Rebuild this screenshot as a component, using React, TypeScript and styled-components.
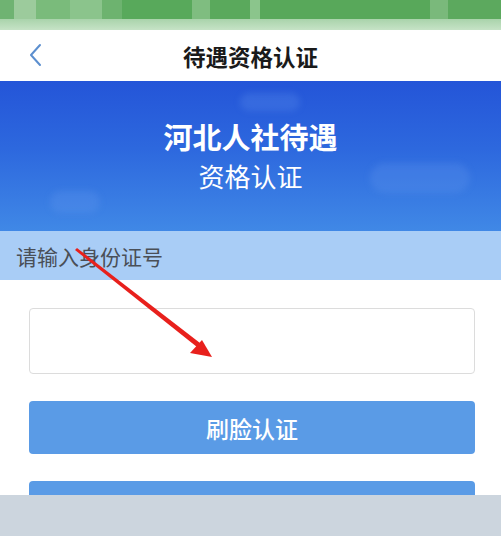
import React from "react";
import styled, { createGlobalStyle } from "styled-components";

const GlobalStyle = createGlobalStyle`
  html, body {
    margin: 0;
    padding: 0;
    background: #fff;
  }
  body {
    font-family: "Noto Sans CJK SC", "Noto Sans", sans-serif;
  }
`;

const Screen = styled.div`
  position: relative;
  width: 501px;
  height: 536px;
  overflow: hidden;
  background: #fff;
  display: flex;
  flex-direction: column;
`;

const StatusBar = styled.div`
  height: 30px;
  display: flex;
  flex-direction: column;
`;

const GreenBlur = styled.div`
  height: 19px;
  display: flex;
  background: #5aa95c;
`;

const Pixel = styled.div<{ tone: string; w: number }>`
  width: ${(p) => p.w}px;
  background: ${(p) => p.tone};
`;

const PaleGreen = styled.div`
  flex: 1;
  background: linear-gradient(180deg, #a9d3ab 0%, #c6e3c6 100%);
`;

const NavBar = styled.div`
  height: 51px;
  display: flex;
  align-items: center;
  justify-content: center;
  position: relative;
  background: #fff;
`;

const BackButton = styled.div`
  position: absolute;
  left: 28px;
  top: 12px;
  width: 16px;
  height: 26px;
`;

const NavTitle = styled.h1`
  margin: 0;
  font-size: 22.5px;
  font-weight: 700;
  color: #1a1a1a;
`;

const Banner = styled.div`
  position: relative;
  height: 150px;
  background: linear-gradient(180deg, #2455d8 0%, #2d68de 45%, #4088e6 100%);
  display: flex;
  flex-direction: column;
  align-items: center;
  padding-top: 35px;
  box-sizing: border-box;
  overflow: hidden;
`;

const Cloud = styled.div<{ w: number; h: number }>`
  position: absolute;
  width: ${(p) => p.w}px;
  height: ${(p) => p.h}px;
  border-radius: ${(p) => p.h}px;
  background: rgba(110, 160, 240, 0.22);
  filter: blur(3px);
`;

const BannerTitle = styled.div`
  position: relative;
  font-size: 29px;
  font-weight: 700;
  color: #fff;
  line-height: 40px;
`;

const BannerSub = styled.div`
  position: relative;
  margin-top: 3px;
  font-size: 26px;
  font-weight: 400;
  color: #fff;
  line-height: 34px;
`;

const HintBar = styled.div`
  height: 49px;
  background: #a9cdf6;
  display: flex;
  align-items: center;
  padding-left: 16px;
  font-size: 21px;
  color: #4a4f57;
`;

const Form = styled.div`
  display: flex;
  flex-direction: column;
  gap: 27px;
  padding: 28px 26px 0 29px;
`;

const Input = styled.div`
  height: 64px;
  border: 1px solid #dcdcdc;
  border-radius: 4px;
  background: #fff;
`;

const PrimaryButton = styled.div`
  height: 53px;
  border-radius: 4px;
  background: #5a9be6;
  color: #fff;
  font-size: 23px;
  font-weight: 500;
  display: flex;
  align-items: center;
  justify-content: center;
`;

const BottomOverlay = styled.div`
  position: absolute;
  left: 0;
  right: 0;
  bottom: 0;
  height: 41px;
  background: #ccd5de;
`;

const Arrow = styled.svg`
  position: absolute;
  left: 0;
  top: 0;
  pointer-events: none;
`;

const pixels: [string, number][] = [
  ["#6fb372", 14], ["#9ccb9c", 22], ["#7abb7b", 34], ["#8bc48c", 32],
  ["#6db36f", 20], ["#58a95b", 70], ["#7fbd80", 18], ["#5aa95c", 40],
  ["#8bc58c", 10], ["#58a85a", 170], ["#7ab97b", 18], ["#5ca95e", 53],
];

const App = () => (
  <>
    <GlobalStyle />
    <Screen>
      <StatusBar>
        <GreenBlur>
          {pixels.map(([tone, w], i) => (
            <Pixel key={i} tone={tone} w={w} />
          ))}
        </GreenBlur>
        <PaleGreen />
      </StatusBar>
      <NavBar>
        <BackButton>
          <svg width="16" height="26" viewBox="0 0 16 26">
            <path d="M12 3 L3 13 L12 23" fill="none" stroke="#5c8fcf" strokeWidth="2" strokeLinecap="round" strokeLinejoin="round" />
          </svg>
        </BackButton>
        <NavTitle>待遇资格认证</NavTitle>
      </NavBar>
      <Banner>
        <Cloud w={50} h={22} style={{ left: 50, top: 110 }} />
        <Cloud w={100} h={30} style={{ left: 370, top: 82 }} />
        <Cloud w={60} h={18} style={{ left: 240, top: 12 }} />
        <BannerTitle>河北人社待遇</BannerTitle>
        <BannerSub>资格认证</BannerSub>
      </Banner>
      <HintBar>请输入身份证号</HintBar>
      <Form>
        <Input />
        <PrimaryButton>刷脸认证</PrimaryButton>
        <PrimaryButton />
      </Form>
      <BottomOverlay />
      <Arrow width="501" height="536" viewBox="0 0 501 536">
        <polygon points="75,250 77,248 200,343 197,347" fill="#e8201c" />
        <polygon points="212,357 190,353 202,340" fill="#e8201c" />
      </Arrow>
    </Screen>
  </>
);

export default App;
